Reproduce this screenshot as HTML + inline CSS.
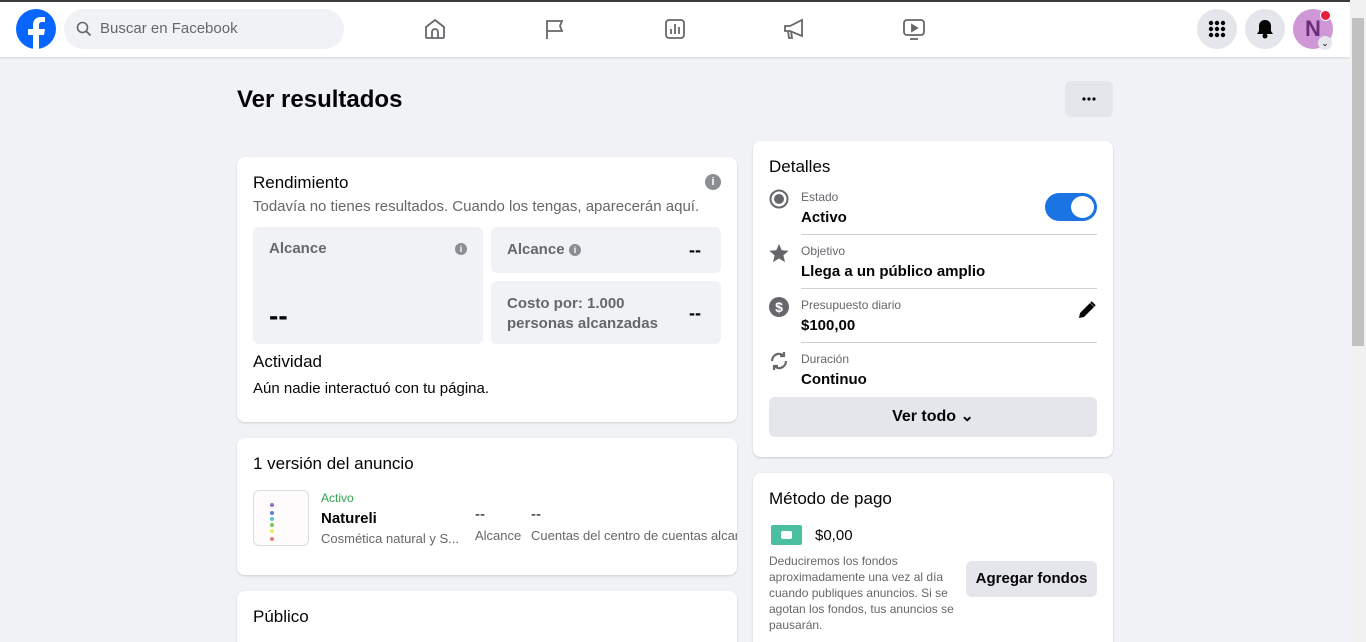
<!DOCTYPE html>
<html style="width:1366px;height:642px;overflow:hidden"><head><meta charset="utf-8">
<style>
*{box-sizing:border-box;margin:0;padding:0}
body{width:1366px;height:642px;overflow:hidden;background:#f0f2f5;font-family:"Liberation Sans",sans-serif;color:#050505;position:relative}
.a{position:absolute}
.card{position:absolute;background:#fff;border-radius:8px;box-shadow:0 1px 2px rgba(0,0,0,.15)}
.hdr{position:absolute;left:0;top:0;width:1350px;height:57px;background:#fff;border-top:2px solid #3e3a3a;box-shadow:0 1px 2px rgba(0,0,0,.12)}
.g{color:#65676b}
.box{position:absolute;background:#f0f2f5;border-radius:6px}
.sep{position:absolute;left:801px;width:296px;height:1px;background:#ced0d4}
</style></head><body>
<div class="hdr">
 <svg class="a" style="left:16px;top:7px" width="40" height="40" viewBox="0 0 40 40"><circle cx="20" cy="20" r="20" fill="#0866ff"/><path d="M23 40V26h5l1-6h-6v-4c0-2 1-3 3-3h3V8h-4c-5 0-8 3-8 8v4h-5v6h5v14z" fill="#fff"/></svg>
 <div class="a" style="left:64px;top:7px;width:280px;height:40px;border-radius:20px;background:#f0f2f5"></div>
 <svg class="a" style="left:76px;top:19px" width="16" height="16" viewBox="0 0 16 16"><circle cx="6.5" cy="6.5" r="5" fill="none" stroke="#65676b" stroke-width="1.6"/><path d="M10 10l4.5 4.5" stroke="#65676b" stroke-width="1.8"/></svg>
 <div class="a g" style="left:100px;top:18px;font-size:15px">Buscar en Facebook</div>
 <svg class="a" style="left:423px;top:15px" width="24" height="24" viewBox="0 0 24 24" fill="none" stroke="#65676b" stroke-width="1.8"><path d="M3 10l9-7 9 7v10a1 1 0 0 1-1 1H4a1 1 0 0 1-1-1z"/><path d="M9 21v-6a3 3 0 0 1 6 0v6"/></svg>
 <svg class="a" style="left:543px;top:15px" width="24" height="24" viewBox="0 0 24 24" fill="none" stroke="#65676b" stroke-width="1.8"><path d="M4 22V4h15l-2 5 2 5H4"/></svg>
 <svg class="a" style="left:663px;top:15px" width="24" height="24" viewBox="0 0 24 24" fill="none" stroke="#65676b" stroke-width="1.8"><rect x="3" y="3" width="18" height="18" rx="3"/><path d="M8 17v-5M12 17V7M16 17v-7"/></svg>
 <svg class="a" style="left:782px;top:15px" width="24" height="24" viewBox="0 0 24 24" fill="none" stroke="#65676b" stroke-width="1.8"><path d="M3 9h5l12-6v16L8 14H3z"/><path d="M6 14l1 7h3l-1-7"/></svg>
 <svg class="a" style="left:902px;top:15px" width="24" height="24" viewBox="0 0 24 24" fill="none" stroke="#65676b" stroke-width="1.8"><rect x="2" y="3" width="20" height="15" rx="3"/><path d="M10 8l5 3-5 3z" fill="#65676b"/><path d="M8 22h8"/></svg>
 <div class="a" style="left:1197px;top:7px;width:40px;height:40px;border-radius:50%;background:#e4e6eb"></div>
 <svg class="a" style="left:1207px;top:17px" width="20" height="20" viewBox="0 0 20 20" fill="#050505"><circle cx="4" cy="4" r="2.2"/><circle cx="10" cy="4" r="2.2"/><circle cx="16" cy="4" r="2.2"/><circle cx="4" cy="10" r="2.2"/><circle cx="10" cy="10" r="2.2"/><circle cx="16" cy="10" r="2.2"/><circle cx="4" cy="16" r="2.2"/><circle cx="10" cy="16" r="2.2"/><circle cx="16" cy="16" r="2.2"/></svg>
 <div class="a" style="left:1245px;top:7px;width:40px;height:40px;border-radius:50%;background:#e4e6eb"></div>
 <svg class="a" style="left:1255px;top:17px" width="20" height="20" viewBox="0 0 20 20" fill="#050505"><path d="M10 1c-4 0-6 3-6 6v5l-2 3h16l-2-3V7c0-3-2-6-6-6z"/><circle cx="10" cy="17" r="2.5"/></svg>
 <div class="a" style="left:1293px;top:7px;width:40px;height:40px;border-radius:50%;background:#cf97d6;color:#6a2c7c;font-weight:bold;font-size:22px;text-align:center;line-height:40px">N</div>
 <div class="a" style="left:1320px;top:8px;width:11px;height:11px;border-radius:50%;background:#e41e3f;border:1.5px solid #fff"></div>
 <div class="a" style="left:1318px;top:34px;width:14px;height:14px;border-radius:50%;background:#e4e6eb;font-size:9px;text-align:center;line-height:14px">⌄</div>
</div>
<div class="a" style="left:1350px;top:0;width:16px;height:642px;background:#f1f1f1"></div>
<div class="a" style="left:1352px;top:18px;width:12px;height:328px;background:#c1c1c1"></div>

<div class="a" style="left:237px;top:86px;font-size:24px;font-weight:bold">Ver resultados</div>
<div class="a" style="left:1065px;top:81px;width:48px;height:36px;border-radius:6px;background:#e4e6eb"></div>
<svg class="a" style="left:1081px;top:97px" width="16" height="4" viewBox="0 0 16 4" fill="#050505"><circle cx="3" cy="2" r="1.6"/><circle cx="8" cy="2" r="1.6"/><circle cx="13" cy="2" r="1.6"/></svg>

<div class="card" style="left:237px;top:157px;width:500px;height:265px"></div>
<div class="a" style="left:253px;top:173px;font-size:17px">Rendimiento</div>
<div class="a" style="left:705px;top:174px;width:16px;height:16px;border-radius:50%;background:#8a8d91;color:#fff;font-size:11px;font-weight:bold;text-align:center;line-height:16px">i</div>
<div class="a g" style="left:253px;top:198px;font-size:15px">Todavía no tienes resultados. Cuando los tengas, aparecerán aquí.</div>
<div class="box" style="left:253px;top:227px;width:230px;height:117px"></div>
<div class="a" style="left:269px;top:240px;font-size:15px;font-weight:bold;color:#65676b">Alcance</div>
<div class="a" style="left:455px;top:243px;width:12px;height:12px;border-radius:50%;background:#8a8d91;color:#fff;font-size:9px;font-weight:bold;text-align:center;line-height:12px">i</div>
<div class="a" style="left:269px;top:300px;font-size:28px;font-weight:bold">--</div>
<div class="box" style="left:491px;top:227px;width:230px;height:46px"></div>
<div class="a" style="left:507px;top:241px;font-size:15px;font-weight:bold;color:#65676b">Alcance</div>
<div class="a" style="left:569px;top:244px;width:12px;height:12px;border-radius:50%;background:#8a8d91;color:#fff;font-size:9px;font-weight:bold;text-align:center;line-height:12px">i</div>
<div class="a" style="left:689px;top:240px;font-size:18px;font-weight:bold">--</div>
<div class="box" style="left:491px;top:281px;width:230px;height:63px"></div>
<div class="a" style="left:507px;top:294px;font-size:15px;font-weight:bold;color:#65676b;line-height:20px">Costo por: 1.000<br>personas alcanzadas</div>
<div class="a" style="left:689px;top:303px;font-size:18px;font-weight:bold">--</div>
<div class="a" style="left:253px;top:352px;font-size:17px">Actividad</div>
<div class="a" style="left:253px;top:380px;font-size:15px">Aún nadie interactuó con tu página.</div>

<div class="card" style="left:237px;top:438px;width:500px;height:137px;overflow:hidden">
 <div class="a" style="left:16px;top:16px;font-size:17px;white-space:nowrap">1 versión del anuncio</div>
 <div class="a" style="left:16px;top:52px;width:56px;height:56px;border:1px solid #dadde1;border-radius:6px;background:#fdfbfc">
  <div class="a" style="left:16px;top:12px;width:4px;height:4px;background:#8a6fc0;border-radius:50%"></div>
  <div class="a" style="left:16px;top:20px;width:4px;height:4px;background:#5b7fd3;border-radius:50%"></div>
  <div class="a" style="left:16px;top:26px;width:4px;height:4px;background:#5cc;border-radius:50%"></div>
  <div class="a" style="left:16px;top:32px;width:4px;height:4px;background:#7c5;border-radius:50%"></div>
  <div class="a" style="left:16px;top:38px;width:4px;height:4px;background:#ee5;border-radius:50%"></div>
  <div class="a" style="left:16px;top:46px;width:4px;height:4px;background:#e77;border-radius:50%"></div>
 </div>
 <div class="a" style="left:84px;top:53px;font-size:12px;color:#31a24c">Activo</div>
 <div class="a" style="left:84px;top:72px;font-size:15px;font-weight:bold">Natureli</div>
 <div class="a g" style="left:84px;top:93px;font-size:13px;white-space:nowrap">Cosmética natural y S...</div>
 <div class="a" style="left:238px;top:68px;font-size:15px">--</div>
 <div class="a g" style="left:238px;top:90px;font-size:13px">Alcance</div>
 <div class="a" style="left:294px;top:68px;font-size:15px">--</div>
 <div class="a g" style="left:294px;top:90px;font-size:13px;white-space:nowrap">Cuentas del centro de cuentas alcanzadas</div>
</div>

<div class="card" style="left:237px;top:591px;width:500px;height:80px"></div>
<div class="a" style="left:253px;top:607px;font-size:17px">Público</div>

<div class="card" style="left:753px;top:141px;width:360px;height:316px"></div>
<div class="a" style="left:769px;top:157px;font-size:17px">Detalles</div>
<svg class="a" style="left:769px;top:189px" width="20" height="20" viewBox="0 0 20 20"><circle cx="10" cy="10" r="8.5" fill="none" stroke="#65676b" stroke-width="2"/><circle cx="10" cy="10" r="5" fill="#65676b"/></svg>
<div class="a g" style="left:801px;top:190px;font-size:12px">Estado</div>
<div class="a" style="left:801px;top:209px;font-size:15px;font-weight:bold">Activo</div>
<div class="a" style="left:1045px;top:193px;width:52px;height:28px;border-radius:14px;background:#1b74e4"></div>
<div class="a" style="left:1071px;top:196px;width:23px;height:22px;border-radius:50%;background:#fff"></div>
<div class="sep" style="top:234px"></div>
<svg class="a" style="left:768px;top:242px" width="22" height="22" viewBox="0 0 24 24"><path d="M12 2l3 7 7.5.6-5.7 5 1.8 7.4L12 18l-6.6 4 1.8-7.4-5.7-5L9 9z" fill="#65676b"/></svg>
<div class="a g" style="left:801px;top:244px;font-size:12px">Objetivo</div>
<div class="a" style="left:801px;top:263px;font-size:15px;font-weight:bold">Llega a un público amplio</div>
<div class="sep" style="top:288px"></div>
<div class="a" style="left:769px;top:297px;width:20px;height:20px;border-radius:50%;background:#65676b;color:#fff;font-size:14px;font-weight:bold;text-align:center;line-height:20px">$</div>
<div class="a g" style="left:801px;top:298px;font-size:12px">Presupuesto diario</div>
<div class="a" style="left:801px;top:317px;font-size:15px;font-weight:bold">$100,00</div>
<svg class="a" style="left:1077px;top:300px" width="20" height="20" viewBox="0 0 20 20"><path d="M2 18l1-5L13 3l4 4L7 17z" fill="#050505"/><path d="M14 2l4 4" stroke="#050505" stroke-width="2"/></svg>
<div class="sep" style="top:342px"></div>
<svg class="a" style="left:769px;top:351px" width="20" height="20" viewBox="0 0 20 20" fill="none" stroke="#65676b" stroke-width="2.2"><path d="M3 10a7 7 0 0 1 12-5M17 10a7 7 0 0 1-12 5"/><path d="M15 1v4h-4M5 19v-4h4"/></svg>
<div class="a g" style="left:801px;top:352px;font-size:12px">Duración</div>
<div class="a" style="left:801px;top:371px;font-size:15px;font-weight:bold">Continuo</div>
<div class="a" style="left:769px;top:397px;width:328px;height:40px;border-radius:6px;background:#e4e6eb;text-align:center;line-height:40px;font-size:16px;font-weight:bold">Ver todo ⌄</div>

<div class="card" style="left:753px;top:473px;width:360px;height:200px"></div>
<div class="a" style="left:769px;top:489px;font-size:17px">Método de pago</div>
<div class="a" style="left:771px;top:525px;width:31px;height:20px;border-radius:2px;background:#4cbfa0"></div>
<div class="a" style="left:781px;top:531px;width:11px;height:8px;border-radius:2px;background:#fff"></div>
<div class="a" style="left:815px;top:527px;font-size:15px">$0,00</div>
<div class="a g" style="left:769px;top:553px;font-size:12px;line-height:16px;width:200px">Deduciremos los fondos aproximadamente una vez al día cuando publiques anuncios. Si se agotan los fondos, tus anuncios se pausarán.</div>
<div class="a" style="left:966px;top:561px;width:131px;height:36px;border-radius:6px;background:#e4e6eb;text-align:center;line-height:36px;font-size:15px;font-weight:bold">Agregar fondos</div>
</body></html>
